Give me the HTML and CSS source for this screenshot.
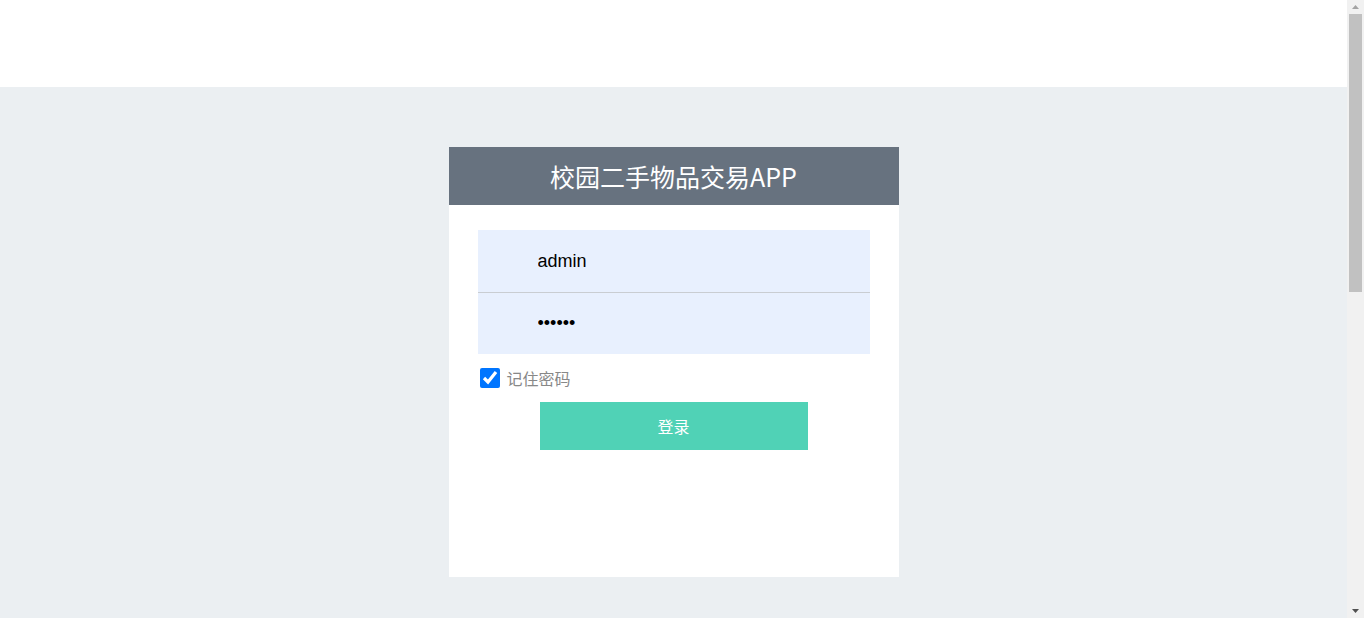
FILE: index.html
```html
<!DOCTYPE html>
<html lang="zh-CN">
<head>
<meta charset="utf-8">
<title>校园二手物品交易APP</title>
<link rel="stylesheet" href="styles.css">
</head>
<body>
<div class="page">
  <div class="topbar"></div>
  <main class="stage">
    <section class="card">
      <h1 class="card-title">校园二手物品交易APP</h1>
      <form class="card-body">
        <div class="fields">
          <input class="field" type="text" value="admin">
          <input class="field" type="password" value="123456">
        </div>
        <label class="remember">
          <input class="check" type="checkbox" checked>
          <span>记住密码</span>
        </label>
        <button class="login" type="button">登录</button>
      </form>
    </section>
  </main>
</div>
<div class="scrollbar" aria-hidden="true">
  <div class="sb-btn"><svg width="7" height="4" viewBox="0 0 7 4"><polygon points="0,4 7,4 3.5,0" fill="#a3a3a3"/></svg></div>
  <div class="sb-track"><div class="sb-thumb"></div></div>
  <div class="sb-btn"><svg width="7" height="4" viewBox="0 0 7 4"><polygon points="0,0 7,0 3.5,4" fill="#505050"/></svg></div>
</div>
</body>
</html>
```
FILE: styles.css
```css
html, body {
  margin: 0;
  padding: 0;
}
body {
  font-family: "Liberation Sans", "Noto Sans CJK SC", sans-serif;
  background: #ffffff;
  padding-right: 17px;
}
.page {
  display: flex;
  flex-direction: column;
}
.topbar {
  height: 87px;
  background: #ffffff;
}
.stage {
  background: #ebeff2;
  padding-top: 60px;
  height: 1163px;
}
.card {
  width: 450px;
  height: 430px;
  margin: 0 auto;
  background: #ffffff;
  display: flex;
  flex-direction: column;
}
.card-title {
  margin: 0;
  height: 58px;
  line-height: 58px;
  background: #67727f;
  color: #ffffff;
  text-align: center;
  font-family: "Noto Sans CJK SC", sans-serif;
  font-weight: 400;
  font-size: 25px;
}
.card-body {
  padding: 25px 29px 0;
  display: flex;
  flex-direction: column;
}
.fields {
  display: flex;
  flex-direction: column;
}
.field {
  box-sizing: border-box;
  width: 392px;
  height: 62px;
  border: none;
  outline: none;
  margin: 0;
  padding: 0 0 0 60px;
  background: #e8f0fe;
  font-family: "Liberation Sans", sans-serif;
  font-size: 18px;
  color: #000000;
}
.field + .field {
  border-top: 1px solid #c9cdd2;
}
.remember {
  display: flex;
  align-items: center;
  gap: 7px;
  margin: 14px 0 0 2px;
  height: 20px;
  font-family: "Noto Sans CJK SC", sans-serif;
  font-size: 16px;
  color: #888888;
}
.check {
  width: 20px;
  height: 20px;
  margin: 0;
  accent-color: #0075ff;
}
.login {
  align-self: center;
  margin-top: 14px;
  width: 268px;
  height: 48px;
  border: none;
  background: #50d2b6;
  color: #ffffff;
  font-family: "Noto Sans CJK SC", sans-serif;
  font-size: 16px;
  cursor: pointer;
}
.scrollbar {
  position: fixed;
  top: 0;
  right: 0;
  bottom: 0;
  width: 17px;
  background: #f1f1f1;
  display: flex;
  flex-direction: column;
}
.sb-btn {
  height: 14px;
  display: flex;
  align-items: center;
  justify-content: center;
}
.sb-btn svg {
  display: block;
}
.sb-track {
  flex: 1;
  padding: 0 2px;
}
.sb-thumb {
  height: 278px;
  background: #c1c1c1;
}
```
